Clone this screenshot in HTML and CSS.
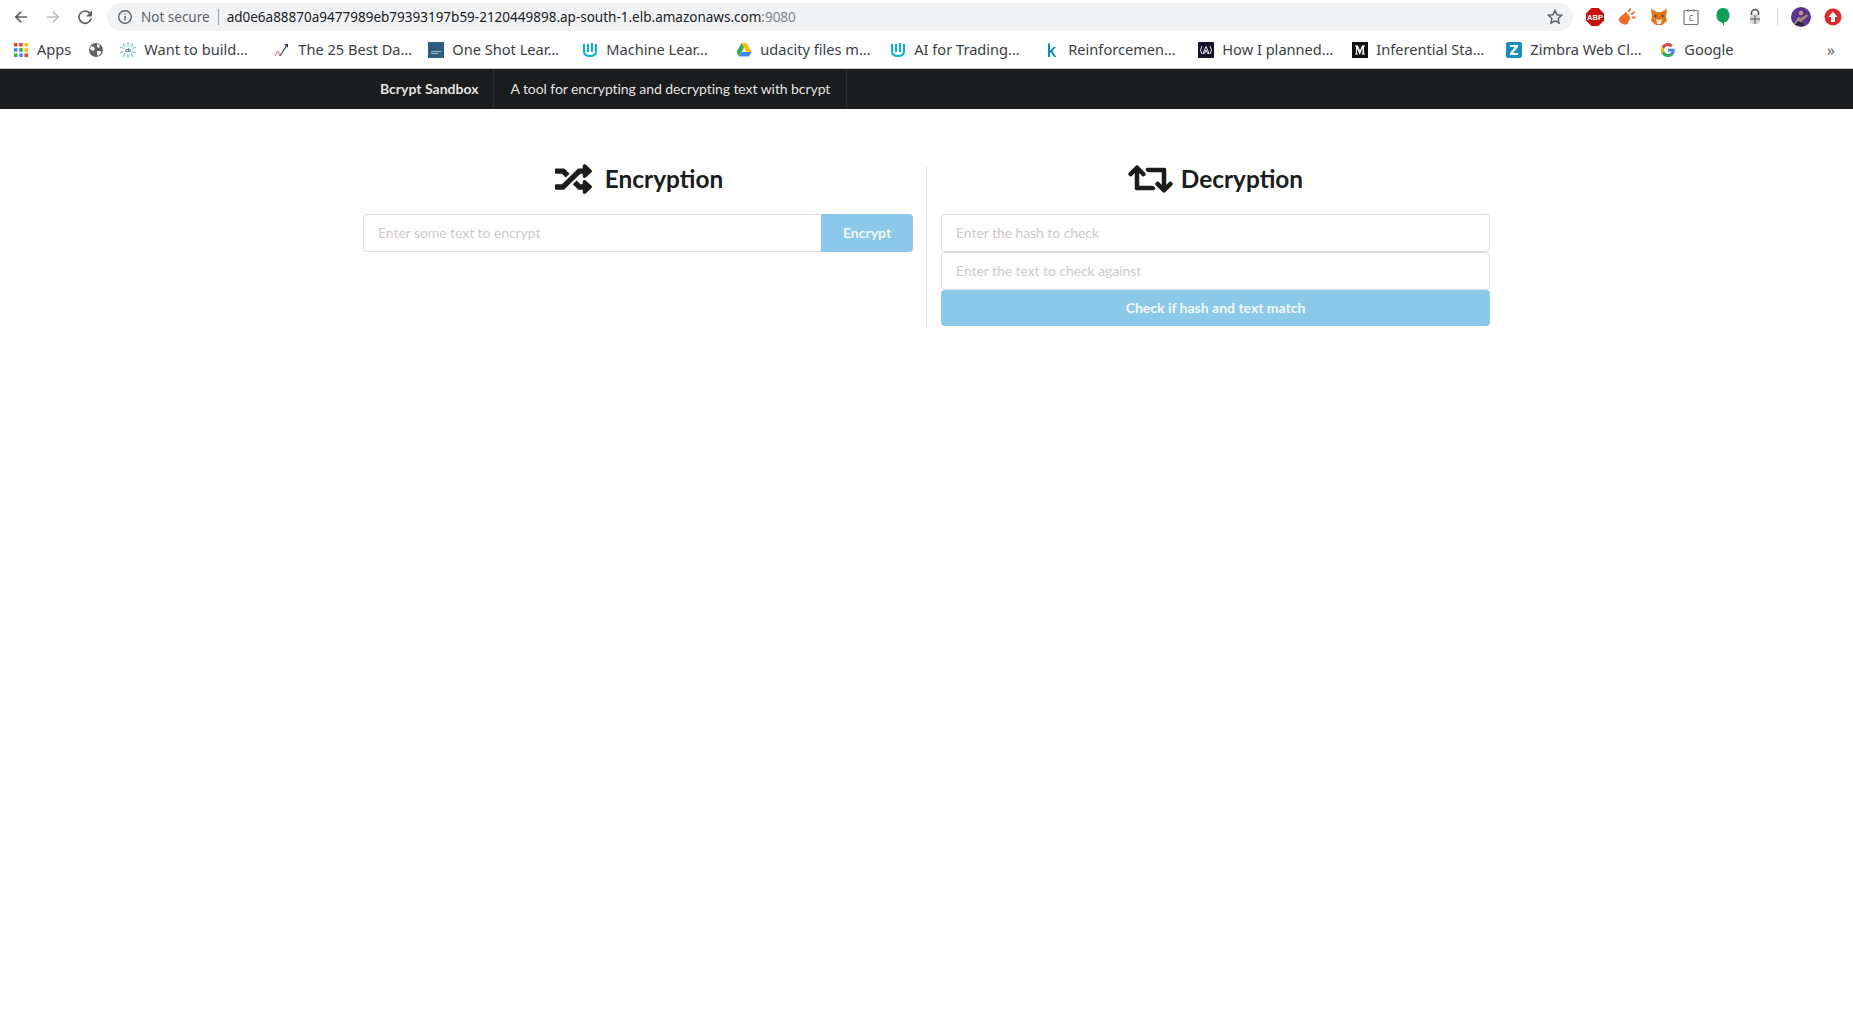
FILE: index.html
```html
<!DOCTYPE html>
<html lang="en">
<head>
    <meta charset="UTF-8">
    <meta name="viewport" content="width=device-width, initial-scale=1.0">
    <title>Bcrypt Sandbox</title>
    <link rel="stylesheet" href="styles.css">
</head>
<body>

<div class="browser-bar">
    <div class="toolbar">
        <svg class="nav-icon" viewBox="0 0 16 16"><path d="M14 7.2H4.8l4-4L7.7 2 1.6 8l6.1 6 1.1-1.2-4-4H14z" fill="#5f6368"/></svg>
        <svg class="nav-icon" viewBox="0 0 16 16"><path d="M2 7.2h9.2l-4-4L8.3 2l6.1 6-6.1 6-1.1-1.2 4-4H2z" fill="#bdc1c6"/></svg>
        <svg class="nav-icon" viewBox="0 0 16 16"><path d="M13.2 3.3A7 7 0 1 0 15 9.5h-1.8a5.3 5.3 0 1 1-1.2-5L9 7.5h6V1.5z" fill="#5f6368"/></svg>
        <div class="omnibox">
            <svg class="info-icon" viewBox="0 0 16 16"><circle cx="8" cy="8" r="6.3" fill="none" stroke="#5f6368" stroke-width="1.4"/><path d="M7.3 7h1.4v4.5H7.3zM7.3 4.4h1.4v1.4H7.3z" fill="#5f6368"/></svg>
            <span class="not-secure">Not secure</span>
            <span class="url">ad0e6a88870a9477989eb79393197b59-2120449898.ap-south-1.elb.amazonaws.com<span class="url-port">:9080</span></span>
            <svg class="star-icon" viewBox="0 0 24 24"><path d="M12 3.5l2.6 5.6 6.1.7-4.5 4.2 1.2 6L12 17l-5.4 3 1.2-6-4.5-4.2 6.1-.7z" fill="none" stroke="#5f6368" stroke-width="2"/></svg>
        </div>
        <div class="extensions">
            <svg class="ext" viewBox="0 0 18 18"><path d="M5.500 0h7L18 5.500v7L12.500 18h-7L0 12.500v-7z" fill="#c70d0d"/><text x="9" y="12" class="abp-text">ABP</text></svg>
            <svg class="ext" viewBox="0 0 18 18"><path d="M1 10l7-6 4.500 5.500-3 6.500C5 18 0 14 1 10z" fill="#f26b2a"/><path d="M10.500 4l2-3.500M13 6.500l3.500-2.500M14 9.500h3.500" stroke="#f26b2a" stroke-width="1.800"/></svg>
            <svg class="ext" viewBox="0 0 18 18"><path d="M1 1l6 3h4l6-3-1 8 1 4-5 4H6l-5-4 1-4z" fill="#e2761b"/><path d="M6 11l3 1 3-1-1 5H7z" fill="#f6e6d6"/><circle cx="5.500" cy="8" r="1" fill="#333"/><circle cx="12.500" cy="8" r="1" fill="#333"/></svg>
            <svg class="ext" viewBox="0 0 18 18"><rect x="2" y="2.500" width="14" height="14" rx="1" fill="#fff" stroke="#777" stroke-width="1.200"/><path d="M11 7.500H8v5h3" fill="none" stroke="#888" stroke-width="1"/><path d="M6 1v3M12 1v3" stroke="#777"/></svg>
            <svg class="ext" viewBox="0 0 18 18"><path d="M9 0c4 0 6.500 3 6.500 7.500 0 4-3 6.500-5.500 7V18l-2-3.500C5 14 2.500 11.500 2.500 7.500 2.500 3 5 0 9 0z" fill="#0f9d58"/></svg>
            <svg class="ext" viewBox="0 0 18 18"><path d="M5.500 7V5a3.500 3.500 0 0 1 7 0v2" fill="none" stroke="#555" stroke-width="1.600"/><rect x="4" y="7" width="10" height="9" rx="3" fill="#d5d5d5"/><path d="M9 7v9M4 11h10" stroke="#555"/></svg>
            <span class="ext-sep"></span>
            <svg class="avatar" viewBox="0 0 20 20"><circle cx="10" cy="10" r="10" fill="#5a3590"/><path d="M3 17l4-7 3 1 6-4 1 2-6 5-2 4z" fill="#a8877c"/><circle cx="10" cy="6" r="2.200" fill="#c79a85"/><path d="M4 18l3-4 5 2 1 3z" fill="#2a2530"/></svg>
            <svg class="ext" viewBox="0 0 18 18"><circle cx="9" cy="9" r="8.500" fill="#e02a2a"/><path d="M9 3.500L13.500 9H11v5H7V9H4.500z" fill="#fff"/></svg>
        </div>
    </div>

    <div class="bookmarks">
        <div class="bm bm-apps">
            <svg class="bm-icon" viewBox="0 0 16 16">
                <rect x="1" y="1" width="3.500" height="3.500" fill="#ea4335"/><rect x="6.200" y="1" width="3.500" height="3.500" fill="#ea4335"/><rect x="11.500" y="1" width="3.500" height="3.500" fill="#fbbc05"/>
                <rect x="1" y="6.200" width="3.500" height="3.500" fill="#4285f4"/><rect x="6.200" y="6.200" width="3.500" height="3.500" fill="#34a853"/><rect x="11.500" y="6.200" width="3.500" height="3.500" fill="#fbbc05"/>
                <rect x="1" y="11.500" width="3.500" height="3.500" fill="#34a853"/><rect x="6.200" y="11.500" width="3.500" height="3.500" fill="#4285f4"/><rect x="11.500" y="11.500" width="3.500" height="3.500" fill="#ea4335"/>
            </svg>
            <span class="bm-text">Apps</span>
        </div>
        <div class="bm bm-globe">
            <svg class="bm-icon" viewBox="0 0 16 16"><circle cx="8" cy="8" r="7" fill="#5f6368"/><path d="M3 4l3 1 1 2-2 2-3-2zM9 2l3 1-1 3-2-1zM9 9l4 0 0 2-3 3-1-2z" fill="#fff"/></svg>
        </div>
        <div class="bm">
            <svg class="bm-icon" viewBox="0 0 16 16"><g stroke="#5cc4ee" stroke-width="1.100"><path d="M8 0v4M3 1l2 4M13 1l-2 4M0 5l4 1.500M16 5l-4 1.500M0 11l4-1.500M16 11l-4-1.500M3 15l2-4M13 15l-2-4M8 16v-4"/></g><text x="8" y="10" class="bm-cb">cb</text></svg>
            <span class="bm-text bm-label">Want to build…</span>
        </div>
        <div class="bm">
            <svg class="bm-icon" viewBox="0 0 16 16"><path d="M1 14l3-5 2 5" fill="none" stroke="#e88" stroke-width="1.200"/><path d="M6 14l7-11" fill="none" stroke="#345" stroke-width="1.200"/><path d="M10 2h4v4z" fill="#345"/></svg>
            <span class="bm-text bm-label">The 25 Best Da…</span>
        </div>
        <div class="bm">
            <svg class="bm-icon" viewBox="0 0 16 16"><rect width="16" height="16" fill="#2f5d7e"/><rect x="3" y="9" width="10" height="1" fill="#9fb8c8"/><rect x="3" y="11" width="7" height="1" fill="#9fb8c8"/></svg>
            <span class="bm-text bm-label">One Shot Lear…</span>
        </div>
        <div class="bm">
            <svg class="bm-icon" viewBox="0 0 16 16"><path d="M2 2v7c0 3 2 5 6 5s6-2 6-5V2M6 2v8M10 1v9" fill="none" stroke="#02b3e4" stroke-width="2"/></svg>
            <span class="bm-text bm-label">Machine Lear…</span>
        </div>
        <div class="bm">
            <svg class="bm-icon" viewBox="0 0 16 16"><path d="M5.500 1h5l5 9h-5z" fill="#fbbc05"/><path d="M5.500 1L.5 10l2.500 4.500 5-9z" fill="#34a853"/><path d="M5.500 10h10L13 14.500H3z" fill="#4285f4"/></svg>
            <span class="bm-text bm-label">udacity files m…</span>
        </div>
        <div class="bm">
            <svg class="bm-icon" viewBox="0 0 16 16"><path d="M2 2v7c0 3 2 5 6 5s6-2 6-5V2M6 2v8M10 1v9" fill="none" stroke="#02b3e4" stroke-width="2"/></svg>
            <span class="bm-text bm-label">AI for Trading…</span>
        </div>
        <div class="bm">
            <svg class="bm-icon" viewBox="0 0 16 16"><path d="M4 1.500h2v7l3.500-3.500H12L8.300 9 12.300 15H10L6.900 10.300 6 11.200V15H4z" fill="#0e8ac8"/></svg>
            <span class="bm-text bm-label">Reinforcemen…</span>
        </div>
        <div class="bm">
            <svg class="bm-icon" viewBox="0 0 16 16"><rect width="16" height="16" rx="1" fill="#14122b"/><path d="M8 4.500L5 11.500h1.500L8 8l1.500 3.500H11zM4 4L2.500 8 4 12M12 4l1.500 4L12 12" fill="none" stroke="#fff" stroke-width=".9"/></svg>
            <span class="bm-text bm-label">How I planned…</span>
        </div>
        <div class="bm">
            <svg class="bm-icon" viewBox="0 0 16 16"><rect width="16" height="16" fill="#111"/><path d="M3 3.500h3l2 5 2-5h3v.6l-1 .6v6.600l1 .6v.6H9.500v-.6l1-.6V6L8 12.500h-.5L5 6.500v4.800l1 .6v.6H3v-.6l1-.6V4.700l-1-.6z" fill="#fff"/></svg>
            <span class="bm-text bm-label">Inferential Sta…</span>
        </div>
        <div class="bm">
            <svg class="bm-icon" viewBox="0 0 16 16"><rect width="16" height="16" rx="2" fill="#1a8cc4"/><path d="M4 3h8v2l-5 6h5v2H4v-2l5-6H4z" fill="#fff"/></svg>
            <span class="bm-text bm-label">Zimbra Web Cl…</span>
        </div>
        <div class="bm">
            <svg class="bm-icon" viewBox="0 0 16 16"><path d="M14.500 6.700H8v2.700h3.700A3.900 3.900 0 0 1 8 12a4 4 0 0 1 0-8c1 0 1.900.4 2.600 1l2-2A6.900 6.900 0 0 0 8 1a7 7 0 0 0 0 14c3.800 0 6.700-2.600 6.700-7 0-.5-.1-.9-.2-1.300z" fill="#4285f4"/><path d="M1.800 4.800L4.100 6.500A4 4 0 0 1 10.600 5l2-2A6.900 6.900 0 0 0 1.800 4.800z" fill="#ea4335"/><path d="M1.800 11.200A7 7 0 0 0 12.700 13l-2.200-1.800A4 4 0 0 1 4.200 9.700z" fill="#34a853"/><path d="M1.800 4.800a7 7 0 0 0 0 6.400l2.400-1.500a4 4 0 0 1-.1-3.200z" fill="#fbbc05"/></svg>
            <span class="bm-text">Google</span>
        </div>
        <span class="bm-more">»</span>
    </div>
</div>

<nav class="app-menu">
    <div class="app-menu-inner">
        <a class="menu-item menu-brand">Bcrypt Sandbox</a>
        <a class="menu-item">A tool for encrypting and decrypting text with bcrypt</a>
    </div>
</nav>

<main class="tool-grid">
    <section class="tool-col">
        <h2 class="tool-title">
            <svg class="title-icon" viewBox="0 0 512 512" preserveAspectRatio="none"><path d="M504.971 359.029c9.373 9.373 9.373 24.569 0 33.941l-80 79.984c-15.01 15.01-40.971 4.49-40.971-16.971V416h-58.785a12.004 12.004 0 0 1-8.773-3.812l-70.556-75.596 53.333-57.143L352 336h32v-39.981c0-21.438 25.943-31.998 40.971-16.971l80 79.981zM12 176h84l52.781 56.551 53.333-57.143-70.556-75.596A11.999 11.999 0 0 0 122.785 96H12c-6.627 0-12 5.373-12 12v56c0 6.627 5.373 12 12 12zm372 0v39.984c0 21.46 25.961 31.98 40.971 16.971l80-79.984c9.373-9.373 9.373-24.569 0-33.941l-80-79.981C409.943 24.021 384 34.582 384 56.019V96h-58.785a12.004 12.004 0 0 0-8.773 3.812L96 336H12c-6.627 0-12 5.373-12 12v56c0 6.627 5.373 12 12 12h110.785c3.326 0 6.503-1.381 8.773-3.812L352 176h32z"/></svg>
            Encryption
        </h2>
        <form class="action-input">
            <input type="text" placeholder="Enter some text to encrypt">
            <button type="button" class="btn">Encrypt</button>
        </form>
    </section>
    <section class="tool-col tool-col-right">
        <h2 class="tool-title">
            <svg class="title-icon title-icon-wide" viewBox="0 0 640 512"><path d="M629.657 343.598L528.971 444.284c-9.373 9.372-24.568 9.372-33.941 0L394.343 343.598c-9.373-9.373-9.373-24.569 0-33.941l10.823-10.823c9.562-9.562 25.133-9.34 34.419.492L480 342.118V160H292.451a24.005 24.005 0 0 1-16.971-7.029l-16-16C244.361 121.851 255.069 96 276.451 96H520c13.255 0 24 10.745 24 24v222.118l40.416-43.792c9.285-9.831 24.856-10.054 34.419-.492l10.823 10.823c9.372 9.372 9.372 24.569-.001 33.941zm-265.138 15.431A23.999 23.999 0 0 0 347.548 352H160V169.881l40.416 43.792c9.286 9.831 24.856 10.054 34.419.491l10.822-10.822c9.373-9.373 9.373-24.569 0-33.941L144.971 67.716c-9.373-9.373-24.569-9.373-33.941 0L10.343 168.402c-9.373 9.373-9.373 24.569 0 33.941l10.822 10.822c9.562 9.562 25.133 9.34 34.419-.491L96 169.881V392c0 13.255 10.745 24 24 24h243.549c21.382 0 32.09-25.851 16.971-40.971l-16.001-16z"/></svg>
            Decryption
        </h2>
        <form class="stack-form">
            <input type="text" placeholder="Enter the hash to check">
            <input type="text" placeholder="Enter the text to check against">
            <button type="button" class="btn btn-full">Check if hash and text match</button>
        </form>
    </section>
</main>

</body>
</html>
```
FILE: styles.css
```css
body {
    font-family: Lato, sans-serif;
    font-size: 14px;
    margin: 0;
    padding: 0;
    background-color: #fff;
    color: #1b1c1d;
}

/* browser chrome */
.browser-bar {
    font-family: "Noto Sans", sans-serif;
    background-color: #fff;
    border-bottom: 1px solid #c8c9cb;
    height: 68px;
}

.toolbar {
    display: flex;
    align-items: flex-start;
    height: 31px;
    padding-top: 3px;
    box-sizing: border-box;
}

.nav-icon {
    width: 16px;
    height: 16px;
    margin: 6px 0 0 13px;
    flex: none;
}

.nav-icon + .nav-icon {
    margin-left: 16px;
}

.omnibox {
    flex: none;
    display: flex;
    align-items: center;
    width: 1466px;
    height: 28px;
    margin-left: 14px;
    padding: 0 9px 0 10px;
    box-sizing: border-box;
    background-color: #f1f3f4;
    border-radius: 14px;
}

.info-icon {
    width: 16px;
    height: 16px;
    flex: none;
}

.not-secure {
    margin-left: 8px;
    padding-right: 8px;
    border-right: 1px solid #9aa0a6;
    color: #5f6368;
    font-size: 13.5px;
    line-height: 16px;
    flex: none;
}

.url {
    margin-left: 8px;
    font-size: 13.5px;
    color: #202124;
    white-space: nowrap;
    flex: 1;
}

.url-port {
    color: #80868b;
}

.star-icon {
    width: 18px;
    height: 18px;
    flex: none;
}

.extensions {
    display: flex;
    align-items: center;
    margin-left: 13px;
    height: 28px;
    gap: 14px;
}

.ext {
    width: 18px;
    height: 18px;
    flex: none;
}

.abp-text {
    font-family: "Liberation Sans", sans-serif;
    font-size: 7.500px;
    font-weight: bold;
    text-anchor: middle;
    fill: #fff;
}

.ext-sep {
    width: 1px;
    height: 18px;
    margin: 0 -1px 0 -1px;
    background-color: #dadce0;
}

.avatar {
    width: 20px;
    height: 20px;
    margin-right: -1px;
    flex: none;
}

.bookmarks {
    display: flex;
    align-items: center;
    height: 37px;
    padding-left: 13px;
    color: #3c4043;
    font-size: 14.6px;
    white-space: nowrap;
}

.bm {
    display: flex;
    align-items: center;
    gap: 8px;
    margin-right: 18px;
}

.bm-apps {
    margin-right: 17px;
}

.bm-globe {
    margin-right: 16px;
}

.bm-icon {
    width: 16px;
    height: 16px;
    flex: none;
}

.bm-cb {
    font-family: "Liberation Sans", sans-serif;
    font-size: 5px;
    font-weight: bold;
    text-anchor: middle;
    fill: #1a4a66;
}

.bm-text {
    margin-bottom: 2px;
}

.bm-label {
    width: 112px;
}

.bm-more {
    margin-left: auto;
    margin-right: 18px;
    color: #5f6368;
    font-size: 16px;
}

/* page menu */
.app-menu {
    background-color: #1b1c1d;
    height: 40px;
}

.app-menu-inner {
    width: 1127px;
    height: 40px;
    margin: 0 auto;
    display: flex;
}

.menu-item {
    padding: 0 16px;
    line-height: 40px;
    color: rgba(255, 255, 255, 0.9);
    border-right: 1px solid rgba(255, 255, 255, 0.08);
    letter-spacing: -0.07px;
}

.menu-brand {
    padding: 0 15px 0 17px;
    font-weight: 700;
    letter-spacing: 0;
}

/* tool columns */
.tool-grid {
    display: grid;
    grid-template-columns: 563px 564px;
    width: 1127px;
    margin: 58px auto 0;
}

.tool-col {
    padding-right: 13px;
}

.tool-col-right {
    padding: 0 0 0 14px;
    border-left: 1px solid #dededf;
}

.tool-title {
    display: flex;
    align-items: center;
    justify-content: center;
    gap: 13px;
    height: 24px;
    margin: 0 0 23px;
    padding-left: 2px;
    font-size: 24.4px;
    font-weight: 700;
    line-height: 1;
}

.tool-col-right .tool-title {
    gap: 8px;
    padding-left: 0;
}

.title-icon {
    width: 37px;
    height: 34px;
    flex: none;
    fill: #1b1c1d;
}

.title-icon-wide {
    width: 45px;
    height: 36px;
}

input {
    font-family: Lato, sans-serif;
    font-size: 14px;
    letter-spacing: -0.07px;
    height: 38px;
    padding: 0 14px 2px;
    box-sizing: border-box;
    border: 1px solid #dededf;
    border-radius: 4px;
    outline: none;
    color: #333;
}

input::placeholder {
    color: #cfcac8;
}

.action-input {
    display: flex;
}

.action-input input {
    flex: 1;
    min-width: 0;
    border-radius: 4px 0 0 4px;
    border-right: none;
}

.btn {
    font-family: Lato, sans-serif;
    font-size: 14px;
    font-weight: 700;
    width: 92px;
    padding: 0 0 2px;
    border: none;
    border-radius: 0 4px 4px 0;
    background-color: #8bc8e9;
    color: #f4fafd;
}

.stack-form {
    display: flex;
    flex-direction: column;
}

.btn-full {
    width: 100%;
    height: 36px;
    border-radius: 4px;
}
```
